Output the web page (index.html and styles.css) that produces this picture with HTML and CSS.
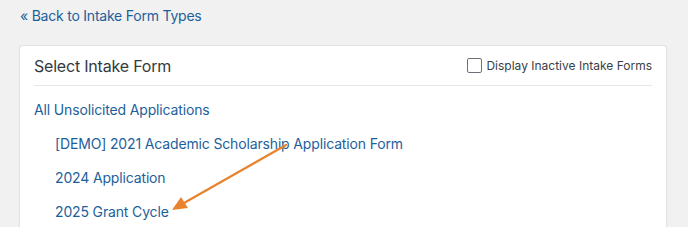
FILE: index.html
```html
<!DOCTYPE html>
<html>
<head>
<meta charset="utf-8">
<link rel="stylesheet" href="styles.css">
</head>
<body>
<div class="page">
  <a class="back" href="#">« Back to Intake Form Types</a>
  <div class="card">
    <div class="card-head">
      <h2 class="title">Select Intake Form</h2>
      <label class="toggle"><span class="box"></span>Display Inactive Intake Forms</label>
    </div>
    <ul class="forms">
      <li class="group"><a href="#">All Unsolicited Applications</a></li>
      <li class="item"><a href="#">[DEMO] 2021 Academic Scholarship Application Form</a></li>
      <li class="item"><a href="#">2024 Application</a></li>
      <li class="item"><a href="#">2025 Grant Cycle</a></li>
    </ul>
    <svg class="arrow" width="688" height="227" viewBox="0 0 688 227">
      <line x1="286" y1="145" x2="184" y2="203" stroke="#e8822c" stroke-width="2.2" stroke-linecap="round"/>
      <polygon points="172,210 181,197 188,208" fill="#e8822c"/>
    </svg>
  </div>
</div>
</body>
</html>
```
FILE: styles.css
```css
html, body { margin: 0; padding: 0; }
body {
  background: #f1f1f1;
  font-family: Inter, "Noto Sans", sans-serif;
  width: 688px;
  height: 227px;
  overflow: hidden;
}
.page { padding: 7px 21px 0 19px; }
.back {
  display: block;
  margin-left: 1px;
  color: #1d5f9b;
  font-size: 14px;
  letter-spacing: -0.22px;
  line-height: 18px;
  text-decoration: none;
}
.card {
  margin-top: 20px;
  background: #fff;
  border: 1px solid #e2e2e2;
  border-bottom: none;
  border-radius: 4px 4px 0 0;
  padding: 0 14px;
  height: 181px;
  box-shadow: 0 1px 2px rgba(0,0,0,0.04);
}
.card-head {
  display: flex;
  align-items: center;
  justify-content: space-between;
  height: 39px;
  border-bottom: 1px solid #e6e6e6;
}
.title {
  margin: 0;
  font-size: 16px;
  font-weight: 400;
  letter-spacing: -0.2px;
  color: #333a40;
}
.toggle {
  display: flex;
  align-items: center;
  font-size: 12px;
  color: #3a3f44;
}
.box {
  box-sizing: border-box;
  width: 15px;
  height: 15px;
  border: 1.5px solid #6b7178;
  border-radius: 2px;
  margin-right: 4px;
}
.forms {
  list-style: none;
  margin: 0;
  padding: 14px 0 0;
}
.forms li { height: 34px; line-height: 20px; font-size: 14px; letter-spacing: -0.15px; }
.forms a { color: #1d5f9b; text-decoration: none; }
.item { padding-left: 21px; }
.arrow { position: absolute; left: 0; top: 0; pointer-events: none; }
```
